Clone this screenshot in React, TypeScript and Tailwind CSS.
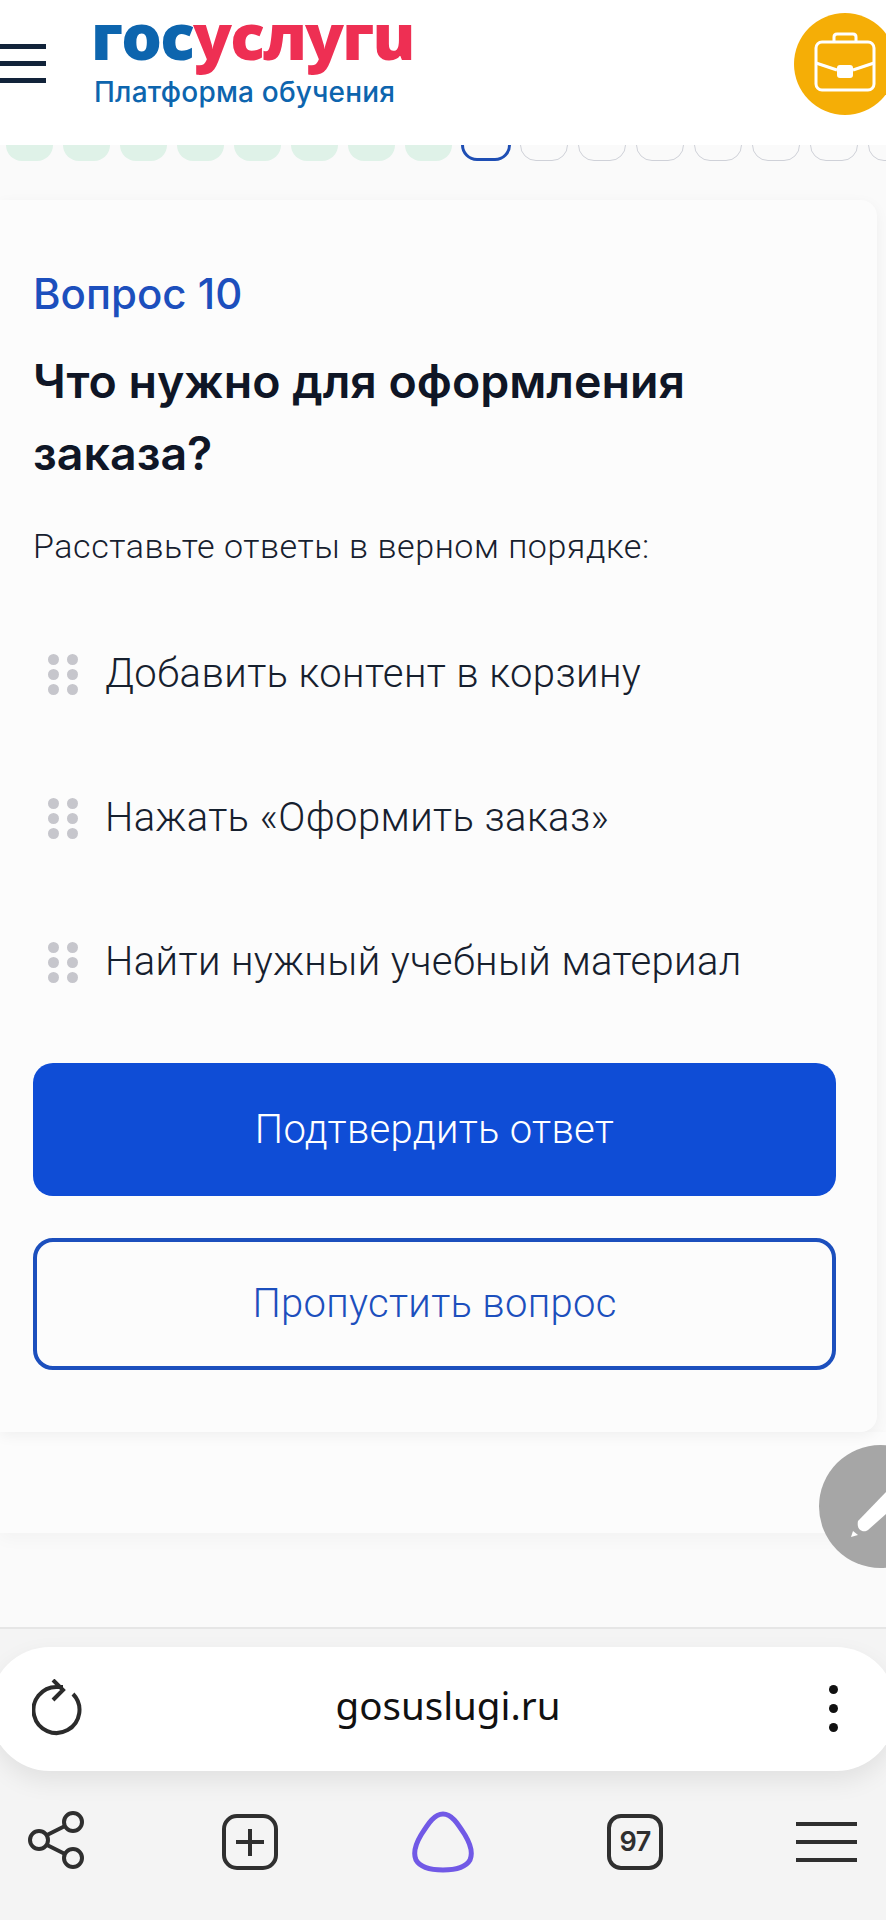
const body = { fontFamily: 'Roboto, sans-serif' }
const heading = { fontFamily: 'Inter, sans-serif' }

const answers = ['Добавить контент в корзину', 'Нажать «Оформить заказ»', 'Найти нужный учебный материал']

function Briefcase() {
  return (
    <svg className="-mt-1" width="62" height="60" viewBox="0 0 62 60" fill="none" stroke="white" strokeWidth="3">
      <rect x="2" y="10" width="58" height="48" rx="6" />
      <path d="M20 10V5c0-2 1-3 3-3h16c2 0 3 1 3 3v5" />
      <path d="M2 31l21 7M60 31l-21 7" />
      <rect x="23" y="33" width="16" height="13" rx="3" fill="white" stroke="none" />
    </svg>
  )
}

function Progress() {
  return (
    <div className="h-4 overflow-hidden flex items-end gap-[10px] pl-[6px] shrink-0">
      {Array.from({ length: 8 }).map((_, i) => (
        <div key={i} className="w-[47px] h-10 shrink-0 rounded-2xl bg-[#dff2e8]" />
      ))}
      <div className="w-[50px] h-10 shrink-0 rounded-2xl border-[3px] border-[#1e4eb4] -mx-[1px]" />
      {Array.from({ length: 7 }).map((_, i) => (
        <div key={i} className="w-[48px] h-10 shrink-0 rounded-2xl border border-[#cfd1d8]" />
      ))}
    </div>
  )
}

function DragDots() {
  return (
    <div className="grid grid-cols-2 gap-x-2 gap-y-1 w-[30px] shrink-0">
      {Array.from({ length: 6 }).map((_, i) => (
        <div key={i} className="w-[11px] h-[11px] rounded-full bg-[#c6c6cc]" />
      ))}
    </div>
  )
}

export default function App() {
  return (
    <div className="relative w-[886px] h-[1920px] overflow-hidden flex flex-col bg-[#fafafa]" style={body}>
      {/* Site header */}
      <header className="h-[145px] shrink-0 bg-white flex items-start">
        <div className="w-[46px] mt-[44px] flex flex-col gap-[12px] shrink-0">
          <div className="h-[5px] bg-[#12233a]" />
          <div className="h-[5px] bg-[#12233a]" />
          <div className="h-[5px] bg-[#12233a]" />
        </div>
        <div className="ml-[45px] flex flex-col">
          <div className="text-[64px] leading-[72px] font-black tracking-[-1.8px] font-['Open_Sans'] whitespace-nowrap">
            <span className="text-[#0d65ae]">гос</span>
            <span className="text-[#ee2f53]">услугu</span>
          </div>
          <div className="text-[28px] leading-[32px] mt-[4px] ml-[3px] font-medium tracking-[0.2px] text-[#0d65ae]" style={heading}>
            Платформа обучения
          </div>
        </div>
        <div className="ml-auto mt-[13px] -mr-[10px] w-[102px] h-[102px] rounded-full bg-[#f5ae06] flex items-center justify-center shrink-0">
          <Briefcase />
        </div>
      </header>

      <Progress />

      {/* Question card */}
      <main className="relative z-10 mt-[39px] mr-[9px] rounded-r-2xl bg-[#fcfcfc] shadow-[0_4px_14px_rgba(0,0,0,0.05)] pt-[70px] px-[33px] shrink-0 h-[1232px]">
        <div className="text-[42px] leading-[48px] font-medium text-[#1c4fbd]" style={heading}>Вопрос 10</div>
        <h1 className="mt-[27px] text-[46.5px] leading-[72px] font-semibold text-[#0f1626]" style={heading}>
          Что нужно для оформления заказа?
        </h1>
        <p className="mt-[37px] text-[34px] leading-[40px] font-light tracking-[0.55px] text-[#16202e]">Расставьте ответы в верном порядке:</p>
        <div className="mt-[84px] flex flex-col gap-[96px]">
          {answers.map((a) => (
            <div key={a} className="flex items-center gap-[27px] pl-[15px] h-[48px]">
              <DragDots />
              <span className="text-[40px] leading-[48px] font-light tracking-[0.4px] text-[#16202e]">{a}</span>
            </div>
          ))}
        </div>
        <button className="mt-[77px] w-[803px] h-[133px] rounded-[20px] bg-[#0f4dd6] text-white text-[40px] font-light tracking-[0.3px]">
          Подтвердить ответ
        </button>
        <button className="mt-[42px] w-[803px] h-[132px] rounded-[20px] border-4 border-[#1c4fbd] text-[#1c4fbd] text-[40px] font-light tracking-[0.3px]">
          Пропустить вопрос
        </button>
      </main>

      <div className="h-[101px] shrink-0 bg-[#fcfcfc] shadow-[0_6px_16px_rgba(0,0,0,0.03)]" />
      <div className="flex-1" />

      {/* Browser bar */}
      <footer className="h-[293px] shrink-0 bg-[#f4f4f4] border-t-2 border-[#e6e6e6] pt-[18px]">
        <div className="relative h-[124px] -mx-[10px] rounded-[60px] bg-white shadow-[0_10px_24px_rgba(0,0,0,0.08)] flex items-center justify-center">
          <svg className="absolute left-[42px] top-[32px]" width="50" height="58" viewBox="0 0 50 58" fill="none" stroke="#2b2b2b" strokeWidth="4">
            <path d="M41 15A23 23 0 1 1 25 8h6" />
            <path d="M21 1l10 10-10 10" />
          </svg>
          <span className="text-[38.5px] font-['Noto_Sans'] text-[#111] -mt-[6px] ml-[10px]">gosuslugi.ru</span>
          <div className="absolute left-[839px] top-[38px] flex flex-col gap-[10px]">
            <div className="w-[9px] h-[9px] rounded-full bg-[#111]" />
            <div className="w-[9px] h-[9px] rounded-full bg-[#111]" />
            <div className="w-[9px] h-[9px] rounded-full bg-[#111]" />
          </div>
        </div>
        <div className="mt-[41px] h-[60px] relative flex items-center justify-between pl-[27px] pr-[29px]">
          <svg width="60" height="64" viewBox="0 0 60 64" fill="none" stroke="#2f2f2f" strokeWidth="4">
            <circle cx="46" cy="12" r="9" />
            <circle cx="12" cy="30" r="9" />
            <circle cx="46" cy="48" r="9" />
            <path d="M20 25l18-9M20 35l18 9" />
          </svg>
          <svg className="ml-[2px]" width="56" height="56" viewBox="0 0 56 56" fill="none" stroke="#2f2f2f" strokeWidth="4">
            <rect x="2" y="2" width="52" height="52" rx="13" />
            <path d="M28 15v27M14 28h28" />
          </svg>
          <svg width="64" height="62" viewBox="0 0 64 62" fill="none" stroke="#7159e6" strokeWidth="5">
            <path d="M32 3C41 3 47 13 54 24C60 34 62 42 59 49C55 56 45 59 32 59C19 59 9 56 5 49C2 42 4 34 10 24C17 13 23 3 32 3Z" />
          </svg>
          <div className="w-[56px] h-[56px] rounded-[14px] border-4 border-[#2f2f2f] flex items-center justify-center text-[27px] font-semibold tracking-[-0.5px] text-[#2f2f2f]" style={heading}>97</div>
          <div className="w-[61px] flex flex-col gap-[14px]">
            <div className="h-1 bg-[#2f2f2f]" />
            <div className="h-1 bg-[#2f2f2f]" />
            <div className="h-1 bg-[#2f2f2f]" />
          </div>
        </div>
      </footer>

      {/* Floating pen button */}
      <div className="absolute z-20 left-[819px] top-[1445px] w-[123px] h-[123px] rounded-full bg-[#a6a6a6] overflow-hidden">
        <svg width="123" height="123" viewBox="0 0 123 123" fill="white">
          <path d="M39 76L70 44l6 17-27 24c-4 3-12 1-10-9Z" />
          <path d="M32 92l2-6 5 4Z" />
        </svg>
      </div>
    </div>
  )
}
